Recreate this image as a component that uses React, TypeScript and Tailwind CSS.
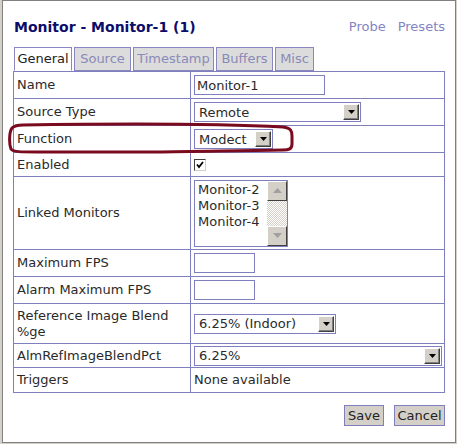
import React from "react";

const font = "font-['DejaVu_Sans','Verdana',sans-serif]";

function DropButton() {
  return (
    <span className="flex h-[16px] w-[16px] items-center justify-center border border-t-white border-l-white border-r-[#404040] border-b-[#404040] bg-[#d4d0c8] shadow-[inset_-1px_-1px_0_#808080]">
      <svg width="7" height="4" viewBox="0 0 7 4">
        <path d="M0 0h7L3.5 4z" fill="#000" />
      </svg>
    </span>
  );
}

function Select({ value, width }: { value: string; width: string }) {
  return (
    <div className={`flex h-[20px] items-center justify-between border border-[#7f7fbf] bg-white pl-[4px] pr-[1px] ${width}`}>
      <span className="leading-none">{value}</span>
      <DropButton />
    </div>
  );
}

function TextBox({ value, width }: { value?: string; width: string }) {
  return (
    <div className={`flex h-[20px] items-center border border-[#7f7fbf] bg-white px-[2px] leading-none ${width}`}>
      {value}
    </div>
  );
}

function ScrollArrow({ up }: { up?: boolean }) {
  return (
    <span className="flex h-[20px] w-[20px] items-center justify-center border border-t-white border-l-white border-r-[#404040] border-b-[#404040] bg-[#d4d0c8]">
      <svg width="9" height="5" viewBox="0 0 9 5">
        <path d={up ? "M0 5h9L4.5 0z" : "M0 0h9L4.5 5z"} fill="#a0a0a0" />
      </svg>
    </span>
  );
}

function ListBox() {
  return (
    <div className="flex h-[67px] w-[94px] border border-[#7f7fbf] bg-white">
      <div className="flex-1 pl-[3px] pt-[1px] leading-[16px]">
        <div>Monitor-2</div>
        <div>Monitor-3</div>
        <div>Monitor-4</div>
      </div>
      <div className="flex w-[20px] flex-col justify-between bg-[repeating-conic-gradient(#d4d0c8_0%_25%,#ffffff_0%_50%)] bg-[length:2px_2px]">
        <ScrollArrow up />
        <ScrollArrow />
      </div>
    </div>
  );
}

const rows: { label: React.ReactNode; h: string; field: React.ReactNode }[] = [
  { label: "Name", h: "h-[27px]", field: <TextBox value="Monitor-1" width="w-[131px]" /> },
  { label: "Source Type", h: "h-[27px]", field: <Select value="Remote" width="w-[167px]" /> },
  { label: "Function", h: "h-[27px]", field: <Select value="Modect" width="w-[79px]" /> },
  {
    label: "Enabled",
    h: "h-[24px]",
    field: (
      <span className="flex h-[12px] w-[12px] items-center justify-center border border-[#404040] border-r-[#d4d0c8] border-b-[#d4d0c8] bg-white">
        <svg width="8" height="8" viewBox="0 0 8 8">
          <path d="M1 3.5l2 2.5L7 1" stroke="#000" strokeWidth="1.8" fill="none" />
        </svg>
      </span>
    ),
  },
  { label: "Linked Monitors", h: "h-[73px]", field: <ListBox /> },
  { label: "Maximum FPS", h: "h-[27px]", field: <TextBox width="w-[61px]" /> },
  { label: "Alarm Maximum FPS", h: "h-[27px]", field: <TextBox width="w-[61px]" /> },
  {
    label: (
      <>
        Reference Image Blend
        <br />
        %ge
      </>
    ),
    h: "h-[40px]",
    field: <Select value="6.25% (Indoor)" width="w-[142px]" />,
  },
  { label: "AlmRefImageBlendPct", h: "h-[24px]", field: <Select value="6.25%" width="w-[248px]" /> },
  { label: "Triggers", h: "h-[25px]", field: <span>None available</span> },
];

const tabs = [
  { t: "General", w: "w-[58px]" },
  { t: "Source", w: "w-[57px]" },
  { t: "Timestamp", w: "w-[81px]" },
  { t: "Buffers", w: "w-[57px]" },
  { t: "Misc", w: "w-[39px]" },
];

export default function App() {
  return (
    <div className={`h-[444px] w-[457px] bg-[#d4d0c8] pl-[2px] pb-[1px] pr-[1px] ${font} text-[13px] text-[#2a2a2a]`}>
      <div className="relative h-full border border-[#808080] bg-white">
        <div className="flex items-start justify-between pl-[11px] pr-[10px] pt-[16px]">
          <h1 className="text-[14px] font-bold leading-[20px] text-[#0c0c6a]">Monitor - Monitor-1 (1)</h1>
          <div className="flex gap-[12px] text-[#8484c4]">
            <span>Probe</span>
            <span>Presets</span>
          </div>
        </div>

        <div className="mt-[10px] flex gap-[2px] pl-[11px]">
          {tabs.map((tab, i) => (
            <div
              key={tab.t}
              className={`flex h-[24px] items-center justify-center border border-[#8a86c0] ${tab.w} ${
                i === 0 ? "border-b-white bg-white text-[#222]" : "bg-[#dcdcdc] text-[#8a8ab8]"
              }`}
            >
              {tab.t}
            </div>
          ))}
        </div>

        <table className="ml-[10px] w-[432px] border-collapse border border-[#7f7fbf]">
          <tbody>
            {rows.map((r, i) => (
              <tr key={i} className={r.h}>
                <td className="w-[177px] border border-[#7f7fbf] pl-[3px] align-middle leading-[16px]">{r.label}</td>
                <td className="border border-[#7f7fbf] pl-[3px] align-middle">{r.field}</td>
              </tr>
            ))}
          </tbody>
        </table>

        <div className="mt-[12px] flex justify-end gap-[10px] pr-[10px]">
          <button className="h-[21px] w-[40px] border border-[#7f7fbf] bg-[#d4d0c8] leading-none text-[#222]">Save</button>
          <button className="h-[21px] w-[51px] border border-[#7f7fbf] bg-[#d4d0c8] leading-none text-[#222]">Cancel</button>
        </div>

        <svg className="pointer-events-none absolute left-[4px] top-[121px]" width="290" height="34" viewBox="0 0 290 34">
          <path
            d="M16 3 C 80 2, 200 1, 276 5 C 284 6, 285 9, 285 14 L 285 22 C 285 27, 282 28, 276 28 C 220 29, 180 29, 150 30 L 30 30 C 14 30, 6 30, 4 27 C 2 22, 2 10, 5 6 C 7 4, 10 3, 16 3 Z"
            fill="none"
            stroke="#7a0a1e"
            strokeWidth="3"
          />
        </svg>
      </div>
    </div>
  );
}
